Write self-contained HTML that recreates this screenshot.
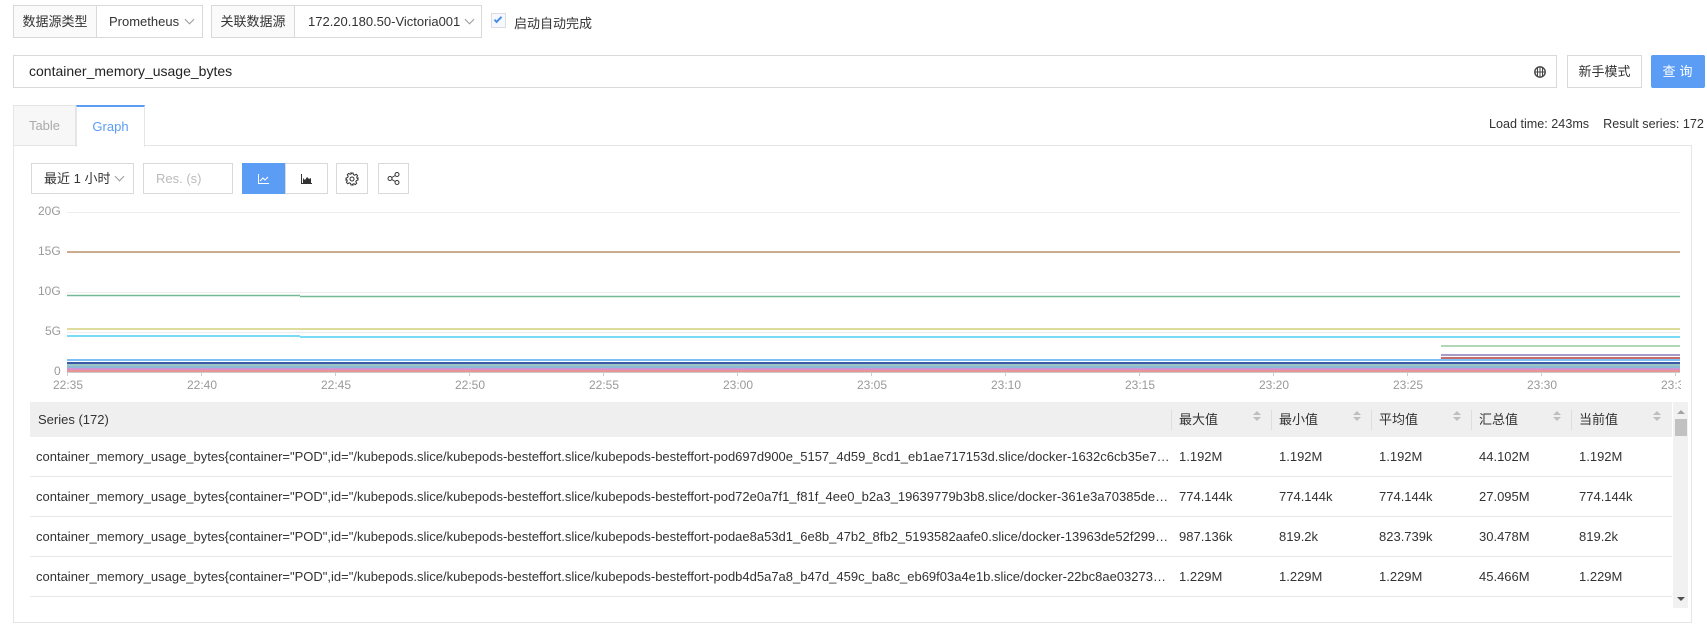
<!DOCTYPE html>
<html><head><meta charset="utf-8"><style>
*{box-sizing:border-box;margin:0;padding:0}
body{width:1707px;height:633px;background:#fff;font-family:"Liberation Sans","Noto Sans CJK SC",sans-serif;font-size:13px;color:#333;position:relative;overflow:hidden}
.a{position:absolute}
.bx{position:absolute;border:1px solid #d9d9d9;background:#fff;white-space:nowrap}
.lbl{position:absolute;left:0;top:0;bottom:0;background:#fafafa;border-right:1px solid #d9d9d9;text-align:center}
.chev{position:absolute;width:7px;height:7px;border-right:1px solid #999;border-bottom:1px solid #999;transform:rotate(45deg)}
.tk{position:absolute;color:#999;font-size:12px}
.th{position:absolute;top:402px;height:35px;line-height:35px;font-size:13px;color:#333}
.row{position:absolute;left:30px;width:1642px;height:40px;border-bottom:1px solid #e8e8e8;line-height:40px}
.row span{position:absolute;top:0}
.s{left:6px;width:1134px;white-space:nowrap;overflow:hidden;text-overflow:ellipsis}
.sort{position:absolute;top:13px;width:0;height:0}
.sort:before{content:"";position:absolute;left:0;top:0;border:4px solid transparent;border-bottom:4px solid #bfbfbf;border-top:none}
.sort:after{content:"";position:absolute;left:0;top:6px;border:4px solid transparent;border-top:4px solid #bfbfbf;border-bottom:none}
</style></head><body>
<!-- top selects -->
<div class="bx" style="left:13px;top:5px;width:190px;height:33px;line-height:31px">
 <div class="lbl" style="width:83px">数据源类型</div>
 <div class="a" style="left:95px;top:0">Prometheus</div><span class="chev" style="left:172px;top:10px"></span>
</div>
<div class="bx" style="left:211px;top:5px;width:271px;height:33px;line-height:31px">
 <div class="lbl" style="width:83px">关联数据源</div>
 <div class="a" style="left:96px;top:0">172.20.180.50-Victoria001</div><span class="chev" style="left:254px;top:10px"></span>
</div>
<div class="bx" style="left:491px;top:13px;width:15px;height:15px;background:#f5f8ff;border-color:#ddd"><div style="position:absolute;left:4px;top:1px;width:4px;height:8px;border-right:2px solid #4a90e2;border-bottom:2px solid #4a90e2;transform:rotate(45deg)"></div></div>
<div class="a" style="left:514px;top:13px">启动自动完成</div>
<!-- query -->
<div class="bx" style="left:13px;top:55px;width:1544px;height:33px;line-height:31px;padding-left:15px;font-size:14px;color:#222">container_memory_usage_bytes
 <svg class="a" style="left:1520px;top:10px" width="12" height="12" viewBox="0 0 12 12"><circle cx="6" cy="6" r="5.2" fill="none" stroke="#444" stroke-width="1.4"/><path d="M1 6h10M6 1v10M3.5 2v8M8.5 2v8" stroke="#444" stroke-width="1"/></svg>
</div>
<div class="bx" style="left:1567px;top:55px;width:75px;height:33px;line-height:31px;text-align:center">新手模式</div>
<div class="a" style="left:1651px;top:55px;width:54px;height:33px;line-height:33px;text-align:center;background:#5b9cf5;color:#fff;border-radius:2px;letter-spacing:4px;padding-left:3px">查询</div>
<!-- tabs -->
<div class="a" style="left:13px;top:105px;width:63px;height:41px;background:#f7f7f7;border:1px solid #e5e5e5;border-bottom:none;line-height:40px;text-align:center;color:#aaa">Table</div>
<div class="a" style="left:76px;top:105px;width:69px;height:42px;background:#fff;border:1px solid #e5e5e5;border-top:2px solid #5b9cf5;border-bottom:none;line-height:40px;text-align:center;color:#5b9cf5;z-index:2">Graph</div>
<div class="a" style="left:13px;top:145px;width:1679px;height:478px;border:1px solid #e5e5e5"></div>
<div class="a" style="left:1489px;top:117px;font-size:12.6px;white-space:nowrap">Load time: 243ms&nbsp;&nbsp;&nbsp;&nbsp;Result series: 172</div>
<!-- controls -->
<div class="bx" style="left:31px;top:163px;width:103px;height:31px;line-height:29px;padding-left:12px">最近 1 小时<span class="chev" style="left:84px;top:9px"></span></div>
<div class="bx" style="left:143px;top:163px;width:90px;height:31px;line-height:29px;padding-left:12px;color:#bbb">Res. (s)</div>
<div class="a" style="left:242px;top:163px;width:43px;height:31px;background:#5b9cf5"><svg style="position:absolute;left:16px;top:11px" width="11" height="10"><path d="M.5 0v9.5H11M2 7l3-3 2 2 3-3" fill="none" stroke="#fff" stroke-width="1"/></svg></div>
<div class="bx" style="left:285px;top:163px;width:43px;height:31px"><svg style="position:absolute;left:15px;top:10px" width="11" height="10"><path d="M.5 0v9.5H11" fill="none" stroke="#333"/><path d="M2 9V4l2 2 2-3 2 2 2-1v5z" fill="#333"/></svg></div>
<div class="bx" style="left:336px;top:163px;width:32px;height:31px"><svg style="position:absolute;left:8px;top:8px" width="14" height="14" viewBox="0 0 14 14"><circle cx="7" cy="7" r="2" fill="none" stroke="#333"/><path d="M6 1h2l.4 1.6 1.4.6 1.4-.9 1.4 1.4-.9 1.4.6 1.4L13 6v2l-1.6.4-.6 1.4.9 1.4-1.4 1.4-1.4-.9-1.4.6L8 13H6l-.4-1.6-1.4-.6-1.4.9-1.4-1.4.9-1.4-.6-1.4L1 8V6l1.6-.4.6-1.4-.9-1.4 1.4-1.4 1.4.9 1.4-.6z" fill="none" stroke="#333"/></svg></div>
<div class="bx" style="left:378px;top:163px;width:31px;height:31px"><svg style="position:absolute;left:8px;top:8px" width="13" height="13"><circle cx="3" cy="6.5" r="2" fill="none" stroke="#333"/><circle cx="10" cy="2.5" r="2" fill="none" stroke="#333"/><circle cx="10" cy="10.5" r="2" fill="none" stroke="#333"/><path d="M4.8 5.5l3.5-2M4.8 7.5l3.5 2" stroke="#333"/></svg></div>
<!-- chart -->
<div class="tk" style="left:38px;top:204px">20G</div>
<div class="tk" style="left:38px;top:244px">15G</div>
<div class="tk" style="left:38px;top:284px">10G</div>
<div class="tk" style="left:45px;top:324px">5G</div>
<div class="tk" style="left:54px;top:364px">0</div>
<svg class="a" style="left:0;top:0" width="1707" height="400">
<g stroke="#eee" stroke-width="1"><path d="M67 212.5H1680M67 252.5H1680M67 292.5H1680M67 332.5H1680"/></g>
<path d="M67 252H1680" stroke="#b07a4a" stroke-width="1.5" opacity=".8"/>
<path d="M67 295.5H300M300 296.5H1680" stroke="#3d9c6a" stroke-width="1.5" opacity=".7"/>
<path d="M67 329H1680" stroke="#c9c55a" stroke-width="1.5" opacity=".8"/>
<path d="M67 336H300M300 337H1680" stroke="#4fd0f0" stroke-width="1.5"/>
<path d="M1441 346H1680" stroke="#9cc9a0" stroke-width="1.5"/>
<path d="M1441 355H1680" stroke="#8a7ab8" stroke-width="1.5"/>
<path d="M1441 358H1680" stroke="#b03a3a" stroke-width="1.5"/>
<path d="M67 360H1680" stroke="#4fa8f0" stroke-width="1.5"/>
<path d="M67 363H1680" stroke="#3a5aa8" stroke-width="2"/>
<path d="M67 365H1680" stroke="#7ab0b0" stroke-width="1.5"/>
<path d="M67 367H1680" stroke="#6aa0c8" stroke-width="1.5"/>
<path d="M67 369H1680" stroke="#c070c0" stroke-width="1.5"/>
<path d="M67 371H1680" stroke="#e07070" stroke-width="1.5"/>
<path d="M67 372.5H1680" stroke="#ccc"/>
<g stroke="#ccc"><path d="M67.5 372v4M201.5 372v4M335.5 372v4M469.5 372v4M603.5 372v4M737.5 372v4M871.5 372v4M1005.5 372v4M1139.5 372v4M1273.5 372v4M1407.5 372v4M1541.5 372v4M1675.5 372v4"/></g>
</svg>
<div class="tk" style="left:53px;top:378px">22:35</div>
<div class="tk" style="left:187px;top:378px">22:40</div>
<div class="tk" style="left:321px;top:378px">22:45</div>
<div class="tk" style="left:455px;top:378px">22:50</div>
<div class="tk" style="left:589px;top:378px">22:55</div>
<div class="tk" style="left:723px;top:378px">23:00</div>
<div class="tk" style="left:857px;top:378px">23:05</div>
<div class="tk" style="left:991px;top:378px">23:10</div>
<div class="tk" style="left:1125px;top:378px">23:15</div>
<div class="tk" style="left:1259px;top:378px">23:20</div>
<div class="tk" style="left:1393px;top:378px">23:25</div>
<div class="tk" style="left:1527px;top:378px">23:30</div>
<div class="tk" style="left:1661px;top:378px;width:20px;overflow:hidden">23:35</div>
<!-- table -->
<div class="a" style="left:30px;top:402px;width:1642px;height:35px;background:#efefef"></div>
<div class="th" style="left:38px">Series (172)</div>
<div class="a" style="left:1171px;top:410px;width:1px;height:20px;background:#ddd"></div>
<div class="a" style="left:1271px;top:410px;width:1px;height:20px;background:#ddd"></div>
<div class="a" style="left:1371px;top:410px;width:1px;height:20px;background:#ddd"></div>
<div class="a" style="left:1471px;top:410px;width:1px;height:20px;background:#ddd"></div>
<div class="a" style="left:1571px;top:410px;width:1px;height:20px;background:#ddd"></div>
<div class="th" style="left:1179px">最大值</div><div class="sort" style="left:1253px;top:411px"></div>
<div class="th" style="left:1279px">最小值</div><div class="sort" style="left:1353px;top:411px"></div>
<div class="th" style="left:1379px">平均值</div><div class="sort" style="left:1453px;top:411px"></div>
<div class="th" style="left:1479px">汇总值</div><div class="sort" style="left:1553px;top:411px"></div>
<div class="th" style="left:1579px">当前值</div><div class="sort" style="left:1653px;top:411px"></div>
<div class="row" style="top:437px"><span class="s">container_memory_usage_bytes{container="POD",id="/kubepods.slice/kubepods-besteffort.slice/kubepods-besteffort-pod697d900e_5157_4d59_8cd1_eb1ae717153d.slice/docker-1632c6cb35e7a1b2c3d4</span><span style="left:1149px">1.192M</span><span style="left:1249px">1.192M</span><span style="left:1349px">1.192M</span><span style="left:1449px">44.102M</span><span style="left:1549px">1.192M</span></div>
<div class="row" style="top:477px"><span class="s">container_memory_usage_bytes{container="POD",id="/kubepods.slice/kubepods-besteffort.slice/kubepods-besteffort-pod72e0a7f1_f81f_4ee0_b2a3_19639779b3b8.slice/docker-361e3a70385de8a9b0c1d2</span><span style="left:1149px">774.144k</span><span style="left:1249px">774.144k</span><span style="left:1349px">774.144k</span><span style="left:1449px">27.095M</span><span style="left:1549px">774.144k</span></div>
<div class="row" style="top:517px"><span class="s">container_memory_usage_bytes{container="POD",id="/kubepods.slice/kubepods-besteffort.slice/kubepods-besteffort-podae8a53d1_6e8b_47b2_8fb2_5193582aafe0.slice/docker-13963de52f299a1b2c3d4e</span><span style="left:1149px">987.136k</span><span style="left:1249px">819.2k</span><span style="left:1349px">823.739k</span><span style="left:1449px">30.478M</span><span style="left:1549px">819.2k</span></div>
<div class="row" style="top:557px"><span class="s">container_memory_usage_bytes{container="POD",id="/kubepods.slice/kubepods-besteffort.slice/kubepods-besteffort-podb4d5a7a8_b47d_459c_ba8c_eb69f03a4e1b.slice/docker-22bc8ae03273a1b2c3d4e5</span><span style="left:1149px">1.229M</span><span style="left:1249px">1.229M</span><span style="left:1349px">1.229M</span><span style="left:1449px">45.466M</span><span style="left:1549px">1.229M</span></div>
<!-- scrollbar -->
<div class="a" style="left:1673px;top:402px;width:15px;height:206px;background:#f1f1f1"></div>
<div class="a" style="left:1677px;top:410px;border:4px solid transparent;border-bottom:4px solid #a3a3a3;border-top:none"></div>
<div class="a" style="left:1675px;top:419px;width:12px;height:17px;background:#c1c1c1"></div>
<div class="a" style="left:1677px;top:597px;border:4px solid transparent;border-top:4px solid #505050;border-bottom:none"></div>
</body></html>
